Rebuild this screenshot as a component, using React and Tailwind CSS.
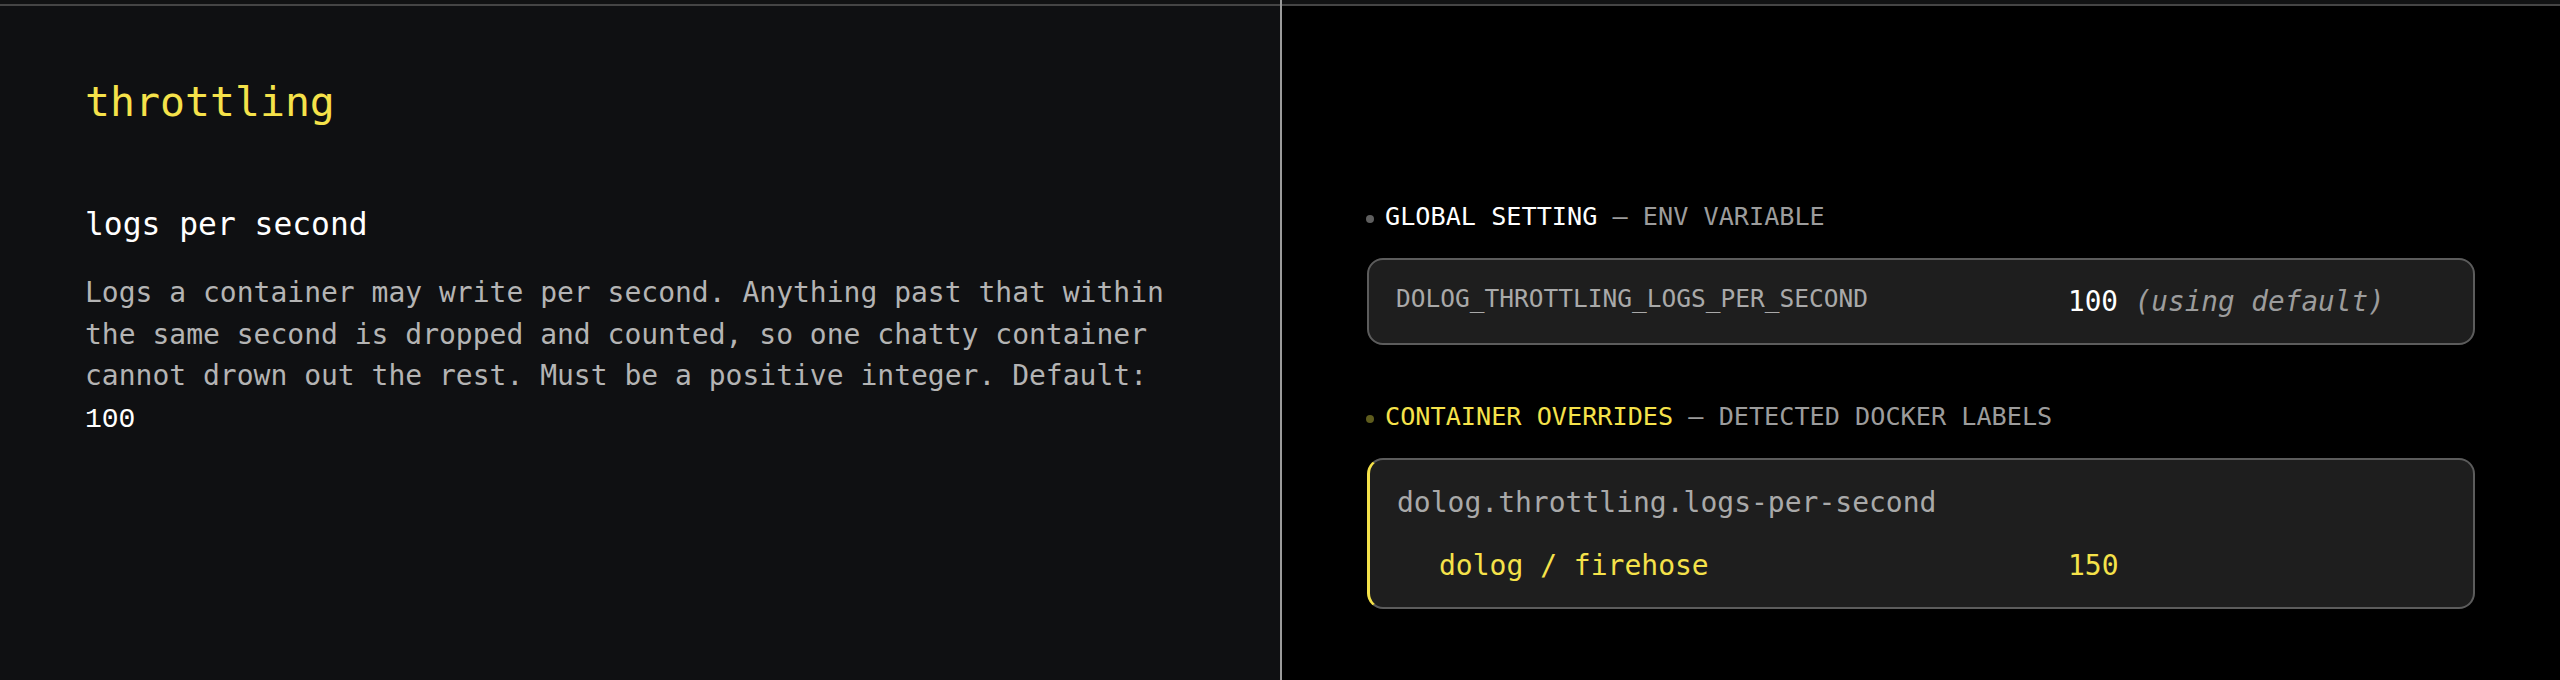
const mono = { fontFamily: '"DejaVu Sans Mono", "Liberation Mono", monospace' };

function SectionHeading({ dot, title, titleClass, note }) {
  return (
    <div className="flex items-center h-[32px] text-[25.2px] leading-[32px]">
      <span className={`w-[8px] h-[8px] rounded-full mt-[3px] mr-[11px] -ml-[1px] ${dot}`} />
      <span className={titleClass}>{title}</span>
      <span className="text-[#9c9c9c]">&nbsp;— {note}</span>
    </div>
  );
}

export default function App() {
  return (
    <div className="w-[2560px] h-[680px] flex overflow-hidden" style={mono}>
      {/* left: setting description */}
      <section className="w-[1280px] h-full flex flex-col bg-[#0f1012]">
        <div className="h-[4px] bg-[#111213]" />
        <div className="h-[2px] bg-[#454545]" />
        <div className="flex-1 px-[85px] pt-[71px]">
          <h1 className="text-[41.5px] leading-[50px] text-[#f5e24a]">throttling</h1>
          <h2 className="mt-[77px] text-[31.3px] leading-[40px] text-white">logs per second</h2>
          <p className="mt-[28px] max-w-[1100px] text-[28px] leading-[41.6px] text-[#b4b4b4]">
            Logs a container may write per second. Anything past that within the same second is
            dropped and counted, so one chatty container cannot drown out the rest. Must be a
            positive integer. Default: <code className="text-white">100</code>
          </p>
        </div>
      </section>

      <div className="w-[2px] h-full bg-[#9b9b9b]" />

      {/* right: where the value comes from */}
      <section className="flex-1 h-full flex flex-col bg-black">
        <div className="h-[4px] bg-[#111213]" />
        <div className="h-[2px] bg-[#454545]" />
        <div className="flex-1 px-[85px] pt-[195px]">
          <SectionHeading
            dot="bg-[#5f5f5f]"
            title="GLOBAL SETTING"
            titleClass="text-white"
            note="ENV VARIABLE"
          />
          <div className="mt-[25px] h-[87px] grid grid-cols-[1fr_378px] items-center px-[27px] rounded-[16px] border-2 border-[#5c5c5c] bg-[#1e1e1e]">
            <span className="text-[24.5px] leading-[32px] text-[#a9a9a9] -mt-[6px]">DOLOG_THROTTLING_LOGS_PER_SECOND</span>
            <span className="text-[27.7px] leading-[42px]">
              <span className="text-white">100</span>{' '}
              <em className="text-[#9c9c9c]">(using default)</em>
            </span>
          </div>

          <div className="mt-[56px]">
            <SectionHeading
              dot="bg-[#5e5c1d]"
              title="CONTAINER OVERRIDES"
              titleClass="text-[#f5e24a]"
              note="DETECTED DOCKER LABELS"
            />
          </div>
          <div className="mt-[25px] h-[151px] pt-[22px] pl-[27px] pr-[27px] rounded-[16px] border-2 border-l-[3px] border-[#5c5c5c] border-l-[#f5e24a] bg-[#1e1e1e] text-[28px] leading-[42px]">
            <div className="text-[#a9a9a9]">dolog.throttling.logs-per-second</div>
            <div className="mt-[21px] pl-[42px] grid grid-cols-[1fr_378px] text-[#f5e24a]">
              <span>dolog / firehose</span>
              <span>150</span>
            </div>
          </div>
        </div>
      </section>
    </div>
  );
}
